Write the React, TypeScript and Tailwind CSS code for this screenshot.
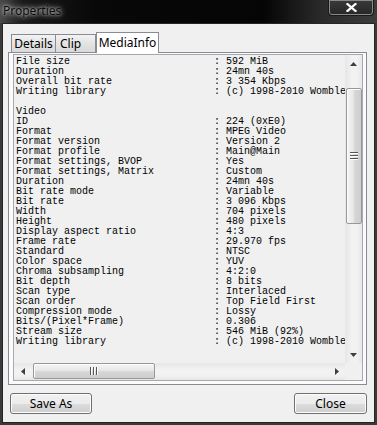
import React from "react";

const rows: [string, string?][] = [
  ["File size", "592 MiB"],
  ["Duration", "24mn 40s"],
  ["Overall bit rate", "3 354 Kbps"],
  ["Writing library", "(c) 1998-2010 Womble Multimedia, Inc."],
  [""],
  ["Video"],
  ["ID", "224 (0xE0)"],
  ["Format", "MPEG Video"],
  ["Format version", "Version 2"],
  ["Format profile", "Main@Main"],
  ["Format settings, BVOP", "Yes"],
  ["Format settings, Matrix", "Custom"],
  ["Duration", "24mn 40s"],
  ["Bit rate mode", "Variable"],
  ["Bit rate", "3 096 Kbps"],
  ["Width", "704 pixels"],
  ["Height", "480 pixels"],
  ["Display aspect ratio", "4:3"],
  ["Frame rate", "29.970 fps"],
  ["Standard", "NTSC"],
  ["Color space", "YUV"],
  ["Chroma subsampling", "4:2:0"],
  ["Bit depth", "8 bits"],
  ["Scan type", "Interlaced"],
  ["Scan order", "Top Field First"],
  ["Compression mode", "Lossy"],
  ["Bits/(Pixel*Frame)", "0.306"],
  ["Stream size", "546 MiB (92%)"],
  ["Writing library", "(c) 1998-2010 Womble Multimedia, Inc."],
];

const fmt = (l: string, v?: string) =>
  v === undefined ? (l === "" ? "\u00a0" : l) : l.padEnd(33, " ") + ": " + v;

const ui = "font-['Noto_Sans',sans-serif]";

function Tri({ dir }: { dir: "up" | "down" | "left" | "right" }) {
  const pts: Record<string, string> = {
    up: "0,4 3.5,0 7,4",
    down: "0,0 3.5,4 7,0",
    left: "4,0 0,3.5 4,7",
    right: "0,0 4,3.5 0,7",
  };
  const vert = dir === "up" || dir === "down";
  return (
    <svg width={vert ? 7 : 4} height={vert ? 4 : 7} viewBox={vert ? "0 0 7 4" : "0 0 4 7"}>
      <polygon points={pts[dir]} fill="#3f3f3f" />
    </svg>
  );
}

export default function App() {
  return (
    <div className="w-[377px] h-[425px] flex flex-col overflow-hidden bg-[#3a3a3a]">
      {/* Title bar */}
      <div className="h-[23px] shrink-0 flex items-start justify-between bg-[linear-gradient(to_right,#4a4a4a_0%,#1a1a1a_6%,#080808_25%,#050505_70%,#2a2a2a_85%,#3c3c3c_100%)]">
        <span
          className={`${ui} ml-[3px] mt-[3px] text-[12px] leading-[16px] text-[#0a0a0a] [text-shadow:0_0_3px_rgba(255,255,255,0.75),0_0_6px_rgba(255,255,255,0.6),0_0_10px_rgba(255,255,255,0.4)]`}
        >
          Properties
        </span>
        <div className="mr-[3px] w-[46px] h-[16px] rounded-b-[4px] border border-t-0 border-[#1a1a1a] shadow-[inset_0_0_0_1px_#8a8a8a] flex items-center justify-center bg-[linear-gradient(to_bottom,#3a3a3a,#262626)]">
          <svg width="11" height="9" viewBox="0 0 11 9">
            <path d="M1.5 1 L9.5 8 M9.5 1 L1.5 8" stroke="#3a3a3a" strokeWidth="3.6" strokeLinecap="square" />
            <path d="M1.5 1 L9.5 8 M9.5 1 L1.5 8" stroke="#ffffff" strokeWidth="2.2" strokeLinecap="square" />
          </svg>
        </div>
      </div>

      {/* Client */}
      <div className="ml-[2px] w-[373px] h-[400px] shrink-0 border border-[#262626] bg-[#f0f0f0] flex flex-col">
        <div className="pt-[8px] pl-[5px] pr-[7px]">
          {/* Tabs */}
          <div className="flex items-end h-[20px] pl-[3px]">
            <div className={`${ui} h-[18px] w-[45px] border border-b-0 border-[#898c95] bg-[linear-gradient(to_bottom,#f3f3f3,#e3e3e3_50%,#d9d9d9)] text-[12px] leading-[17px] text-black flex justify-center`}>
              Details
            </div>
            <div className={`${ui} h-[18px] w-[41px] -ml-px border border-b-0 border-[#898c95] bg-[linear-gradient(to_bottom,#f3f3f3,#e3e3e3_50%,#d9d9d9)] text-[12px] leading-[17px] text-black pl-[4px]`}>
              Clip
            </div>
            <div className={`${ui} relative z-10 h-[21px] w-[63px] -mb-px border border-b-0 border-[#898c95] bg-white text-[12px] leading-[19px] text-black flex justify-center`}>
              MediaInfo
            </div>
          </div>
          {/* Panel */}
          <div className="h-[333px] w-[359px] border border-[#898c95] bg-[#fbfbfb] pt-[1px] pl-[4px] pr-[3px] pb-[3px]">
            <div className="h-[327px] w-[350px] border border-[#a5a9b0] bg-[#f0f0f0] grid grid-cols-[1fr_17px] grid-rows-[1fr_17px]">
              <div className="overflow-hidden pt-[2px] pl-[2px]">
                <pre className="font-['Liberation_Mono',monospace] text-[10px] leading-[10px] text-black whitespace-pre m-0">
                  {rows.map(([l, v], i) => (
                    <div key={i} className="h-[10px]">
                      {fmt(l, v)}
                    </div>
                  ))}
                </pre>
              </div>
              {/* Vertical scrollbar */}
              <div className="flex flex-col bg-[linear-gradient(to_right,#e6e6e6,#f2f2f2_40%,#f2f2f2_70%,#e6e6e6)]">
                <div className="h-[17px] flex items-center justify-center">
                  <Tri dir="up" />
                </div>
                <div className="flex-1">
                  <div className="mt-[16px] mx-auto w-[16px] h-[136px] rounded-[2px] border border-[#989898] bg-[linear-gradient(to_right,#f4f4f4,#e8e8e8_45%,#d6d6d6_55%,#cdcdcd)] shadow-[inset_1px_1px_0_#fdfdfd] flex flex-col items-center justify-center gap-[1px]">
                    <div className="w-[8px] h-[2px] border-t border-[#555] bg-white" />
                    <div className="w-[8px] h-[2px] border-t border-[#555] bg-white" />
                    <div className="w-[8px] h-[2px] border-t border-[#555] bg-white" />
                  </div>
                </div>
                <div className="h-[17px] flex items-center justify-center">
                  <Tri dir="down" />
                </div>
              </div>
              {/* Horizontal scrollbar */}
              <div className="flex bg-[linear-gradient(to_bottom,#e6e6e6,#f2f2f2_40%,#f2f2f2_70%,#e6e6e6)]">
                <div className="w-[17px] flex items-center justify-center">
                  <Tri dir="left" />
                </div>
                <div className="flex-1">
                  <div className="ml-[2px] mt-0 w-[122px] h-[16px] rounded-[2px] border border-[#989898] bg-[linear-gradient(to_bottom,#f4f4f4,#e8e8e8_45%,#d6d6d6_55%,#cdcdcd)] shadow-[inset_1px_1px_0_#fdfdfd] flex items-center justify-center gap-[1px]">
                    <div className="h-[8px] w-[2px] border-l border-[#555] bg-white" />
                    <div className="h-[8px] w-[2px] border-l border-[#555] bg-white" />
                    <div className="h-[8px] w-[2px] border-l border-[#555] bg-white" />
                  </div>
                </div>
                <div className="w-[17px] flex items-center justify-center">
                  <Tri dir="right" />
                </div>
              </div>
              <div className="bg-[#f0f0f0]" />
            </div>
          </div>
        </div>
        {/* Buttons */}
        <div className="mt-[8px] px-[7px] flex justify-between">
          <button className={`${ui} w-[82px] h-[21px] rounded-[3px] border border-[#707070] bg-[linear-gradient(to_bottom,#f2f2f2,#ebebeb_50%,#dddddd_50%,#cfcfcf)] shadow-[inset_0_0_0_1px_#fcfcfc] text-[12px] leading-[18px] text-black`}>
            Save As
          </button>
          <button className={`${ui} w-[73px] h-[21px] rounded-[3px] border border-[#707070] bg-[linear-gradient(to_bottom,#f2f2f2,#ebebeb_50%,#dddddd_50%,#cfcfcf)] shadow-[inset_0_0_0_1px_#fcfcfc] text-[12px] leading-[18px] text-black`}>
            Close
          </button>
        </div>
      </div>
    </div>
  );
}
